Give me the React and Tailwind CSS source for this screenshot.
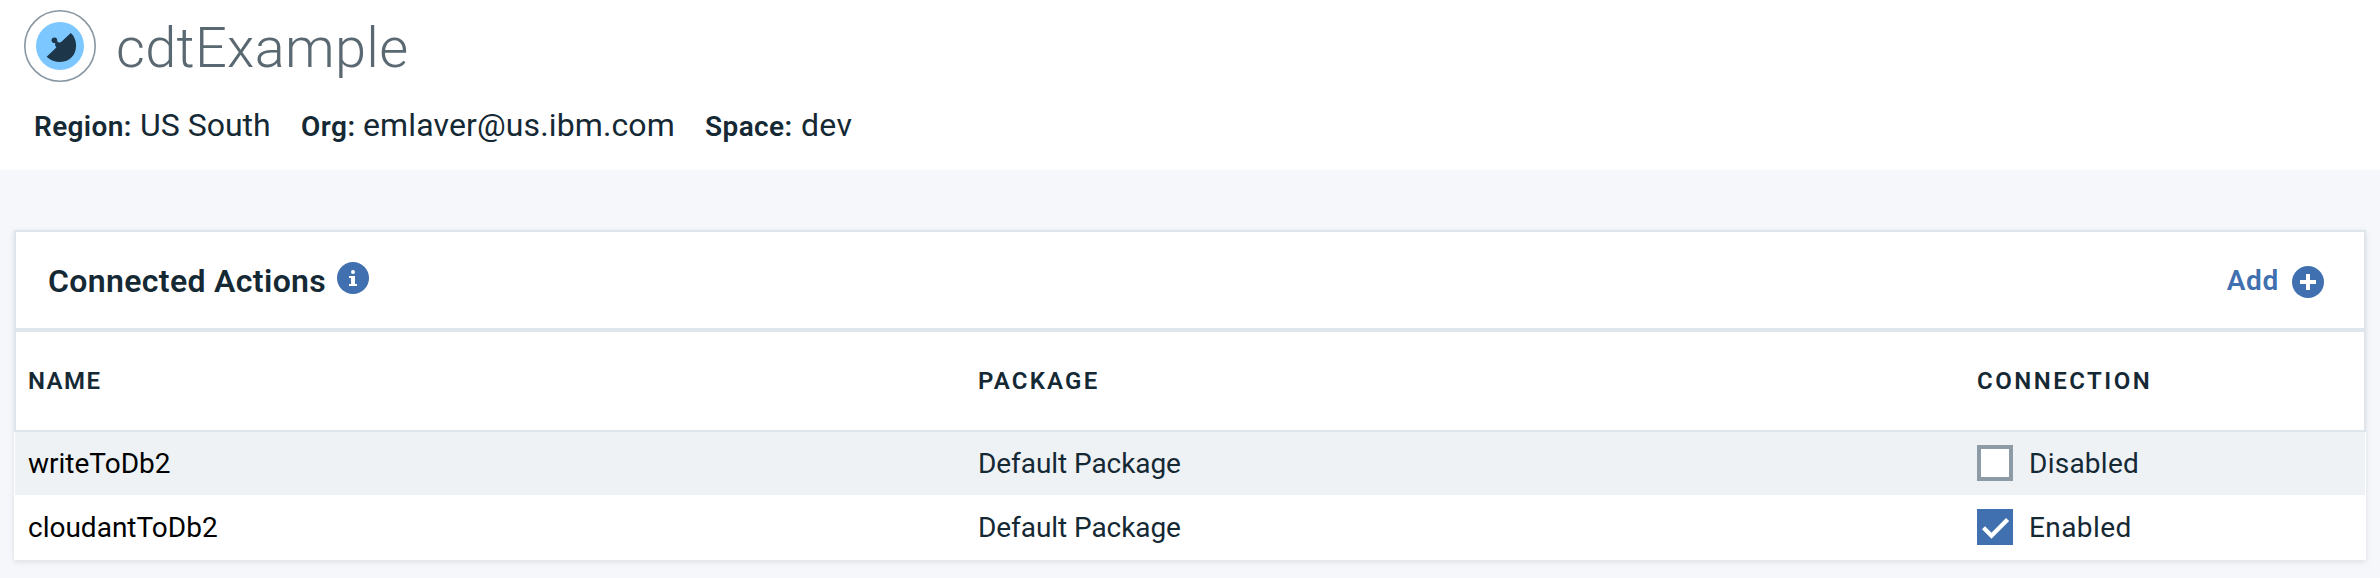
const columns = "grid grid-cols-[950px_999px_1fr] items-center";

function ServiceIcon() {
  return (
    <svg viewBox="0 0 72 72" className="mt-2.5 size-[72px] shrink-0">
      <circle cx="36" cy="36" r="35.2" fill="#fff" stroke="#8897a2" strokeWidth="1.6" />
      <circle cx="36" cy="36" r="24" fill="#7cc7ff" />
      <path
        d="M46.800 22.900C50.400 26 52.100 30.500 52.100 35.800C52.100 45 45.500 51.900 36.500 51.900C31 51.900 26.300 50.200 22.600 46.700L32.400 37.500C31.300 36.300 31 35.200 31.100 33L33.100 31.200C34.200 32.400 35.200 32.600 36.900 32.300Z"
        fill="#1d3649"
      />
      <circle cx="30.400" cy="30.300" r="2.800" fill="#1d3649" />
    </svg>
  );
}

function InfoIcon() {
  return (
    <svg viewBox="0 0 32 32" className="mb-1 ml-[11px] size-8">
      <circle cx="16" cy="16" r="16" fill="#4070b0" />
      <circle cx="16" cy="10" r="2" fill="#fff" />
      <path d="M12 14h6v8h2v2h-8v-2h2v-6h-2z" fill="#fff" />
    </svg>
  );
}

function AddIcon() {
  return (
    <svg viewBox="0 0 32 32" className="mt-1 size-8">
      <circle cx="16" cy="16" r="16" fill="#4070b0" />
      <path d="M14 8h4v6h6v4h-6v6h-4v-6H8v-4h6z" fill="#fff" />
    </svg>
  );
}

function Checkbox({ checked }) {
  return checked ? (
    <svg viewBox="0 0 36 36" className="mb-px size-9 shrink-0">
      <path d="M0 0h36v36H0z" fill="#4070b0" />
      <path d="M6.500 18.800L14.500 26.800L30.600 10.400" fill="none" stroke="#fff" strokeWidth="4.300" />
    </svg>
  ) : (
    <span className="mb-px size-9 shrink-0 border-4 border-[#8c9ba5] bg-white" />
  );
}

export default function App() {
  return (
    <div className="h-[578px] overflow-hidden bg-[#f5f7fb] font-['Roboto',sans-serif] whitespace-nowrap text-[#152935]">
      <header className="h-[170px] bg-white pl-6">
        <div className="flex">
          <ServiceIcon />
          <h1 className="mt-2.5 ml-5 text-[56px] leading-[76px] font-light tracking-[0.3px] text-[#5a6872]">cdtExample</h1>
        </div>
        <div className="mt-[19px] flex items-baseline pl-2.5 text-[32px] leading-10">
          <b className="w-[106px] text-[28px] font-semibold tracking-[0.35px]">Region:</b>
          <span className="w-[161px]">US South</span>
          <b className="w-[62px] text-[28px] font-semibold tracking-[0.5px]">Org:</b>
          <span className="w-[342px] tracking-[0.12px]">emlaver@us.ibm.com</span>
          <b className="w-[96px] text-[28px] font-semibold tracking-[0.4px]">Space:</b>
          <span className="tracking-[0.3px]">dev</span>
        </div>
      </header>

      <section className="mx-[14px] mt-[60px] h-[330px] bg-white shadow-[0_2px_6px_0_rgba(0,0,0,0.1)]">
        <div className="flex h-[100px] items-center justify-between border-2 border-[#dfe6eb] pr-10 pl-8">
          <h2 className="flex items-center text-[32px] leading-10 font-semibold tracking-[0.35px]">
            <span className="mt-0.5">Connected Actions</span>
            <InfoIcon />
          </h2>
          <button className="flex items-center gap-[13px] text-[28px] font-semibold tracking-[0.7px] text-[#4070b0]">
            <span className="mt-0.5">Add</span>
            <AddIcon />
          </button>
        </div>
        <div className={`${columns} h-[102px] border-2 border-[#dfe6eb] pl-3 text-2xl font-semibold`}>
          <span className="tracking-[1.4px]">NAME</span>
          <span className="tracking-[2.2px]">PACKAGE</span>
          <span className="tracking-[2.5px]">CONNECTION</span>
        </div>
        <div className={`${columns} mx-px h-[63px] bg-[#eef2f5] pl-[13px] text-[28px]`}>
          <span className="text-black">writeToDb2</span>
          <span className="tracking-[-0.07px]">Default Package</span>
          <span className="flex items-center gap-4 tracking-[0.25px]"><Checkbox />Disabled</span>
        </div>
        <div className={`${columns} mx-px h-[65px] pl-[13px] text-[28px]`}>
          <span className="text-black">cloudantToDb2</span>
          <span className="tracking-[-0.07px]">Default Package</span>
          <span className="flex items-center gap-4 tracking-[0.4px]"><Checkbox checked />Enabled</span>
        </div>
      </section>
    </div>
  );
}
